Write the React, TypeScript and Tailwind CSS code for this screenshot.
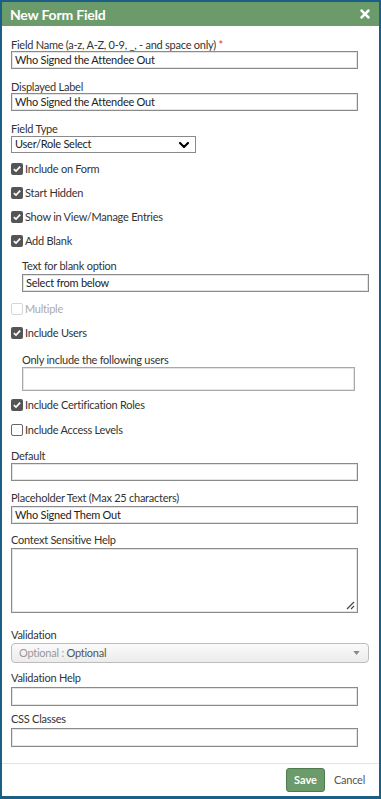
import { FaTimes } from 'react-icons/fa'
import { ChevronDown } from 'lucide-react'

const font = { fontFamily: 'Lato, "Open Sans", Arial, sans-serif' }

function Label({ children, className = '' }: { children: React.ReactNode; className?: string }) {
  return (
    <div className={`h-[13px] text-[11px] leading-[13px] tracking-[-0.25px] text-[#333] ${className}`}>
      {children}
    </div>
  )
}

function TextBox({ value = '', className = '' }: { value?: string; className?: string }) {
  return (
    <div
      className={`flex items-center border border-[#8a8a8a] bg-white px-[3px] text-[11px] tracking-[-0.25px] text-[#222] shadow-[inset_0_0_0_1px_#e4e4e4] ${className}`}
    >
      {value}
    </div>
  )
}

function Check({
  label,
  checked = true,
  disabled = false,
  className = '',
}: {
  label: string
  checked?: boolean
  disabled?: boolean
  className?: string
}) {
  return (
    <div className={`flex h-[14px] items-center gap-[2px] text-[11px] tracking-[-0.25px] ${className}`}>
      {checked ? (
        <span className="flex size-[12px] items-center justify-center rounded-[2px] bg-[#555]">
          <svg viewBox="0 0 12 12" className="size-[10px]">
            <path d="M2.2 6.2 L4.8 8.6 L9.8 3.2" fill="none" stroke="#fff" strokeWidth="2" />
          </svg>
        </span>
      ) : (
        <span
          className={`size-[12px] rounded-[2px] border bg-white ${
            disabled ? 'border-[#d6d6d6]' : 'border-[#666]'
          }`}
        />
      )}
      <span className={disabled ? 'text-[#aaa]' : 'text-[#333]'}>{label}</span>
    </div>
  )
}

export default function App() {
  return (
    <div
      style={font}
      className="flex h-[799px] w-[381px] flex-col border-2 border-b-[3px] border-[#1b5f86] bg-white"
    >
      {/* header */}
      <div className="flex h-[24px] shrink-0 items-center justify-between bg-[#6b9b6b] pl-[8px] pr-[7px]">
        <span className="text-[14px] font-bold tracking-[-0.2px] text-white">New Form Field</span>
        <FaTimes className="size-[14px] text-white" />
      </div>

      {/* body */}
      <div className="flex flex-1 flex-col pl-[9px]">
        <Label className="mt-[12px]">
          Field Name (a-z, A-Z, 0-9, _, - and space only) <span className="text-[#d33]">*</span>
        </Label>
        <TextBox value="Who Signed the Attendee Out" className="h-[18px] w-[347px]" />

        <Label className="mt-[11px]">Displayed Label</Label>
        <TextBox value="Who Signed the Attendee Out" className="h-[18px] w-[347px]" />

        <Label className="mt-[11px]">Field Type</Label>
        <div className="mt-[1px] flex h-[17px] w-[185px] items-center justify-between border border-[#8a8a8a] bg-white pl-[3px] pr-[2px] text-[11px] tracking-[-0.25px] text-[#222]">
          <span>User/Role Select</span>
          <ChevronDown className="h-[16px] w-[18px] text-black" strokeWidth={3.2} />
        </div>

        <Check label="Include on Form" className="mt-[9px]" />
        <Check label="Start Hidden" className="mt-[10px]" />
        <Check label="Show in View/Manage Entries" className="mt-[10px]" />
        <Check label="Add Blank" className="mt-[10px]" />

        <div className="flex flex-col pl-[11px]">
          <Label className="mt-[11px]">Text for blank option</Label>
          <TextBox value="Select from below" className="mt-[2px] h-[18px] w-[347px]" />
        </div>

        <Check label="Multiple" checked={false} disabled className="mt-[10px]" />
        <Check label="Include Users" className="mt-[10px]" />

        <div className="flex flex-col pl-[11px]">
          <Label className="mt-[13px]">Only include the following users</Label>
          <TextBox className="mt-[1px] h-[24px] w-[333px] border-[#aaa]" />
        </div>

        <Check label="Include Certification Roles" className="mt-[7px]" />
        <Check label="Include Access Levels" checked={false} className="mt-[11px]" />

        <Label className="mt-[12px]">Default</Label>
        <TextBox className="mt-[1px] h-[18px] w-[347px]" />

        <Label className="mt-[10px]">Placeholder Text (Max 25 characters)</Label>
        <TextBox value="Who Signed Them Out" className="mt-[2px] h-[18px] w-[347px]" />

        <Label className="mt-[9px]">Context Sensitive Help</Label>
        <div className="relative mt-[2px] h-[65px] w-[347px] border border-[#8a8a8a] bg-white shadow-[inset_0_0_0_1px_#e4e4e4]">
          <svg viewBox="0 0 10 10" className="absolute bottom-[2px] right-[2px] size-[10px]">
            <path d="M9 2 L2 9 M9 6 L6 9" stroke="#444" strokeWidth="1.2" />
          </svg>
        </div>

        <Label className="mt-[15px]">Validation</Label>
        <div className="mt-[2px] flex h-[20px] w-[358px] items-center justify-between rounded-[4px] border border-[#bdbdbd] bg-gradient-to-b from-[#fafafa] to-[#ececec] pl-[7px] pr-[8px] text-[11px] tracking-[-0.25px]">
          <span>
            <span className="text-[#999]">Optional : </span>
            <span className="text-[#555]">Optional</span>
          </span>
          <svg viewBox="0 0 8 5" className="h-[4px] w-[7px]">
            <path d="M0 0 L8 0 L4 5 Z" fill="#888" />
          </svg>
        </div>

        <Label className="mt-[8px]">Validation Help</Label>
        <TextBox className="mt-[3px] h-[19px] w-[347px]" />

        <Label className="mt-[6px]">CSS Classes</Label>
        <TextBox className="mt-[3px] h-[19px] w-[347px]" />
      </div>

      {/* footer */}
      <div className="flex h-[33px] shrink-0 items-center justify-end gap-[9px] border-t border-[#e2e2e2] pr-[14px]">
        <button className="h-[24px] w-[39px] rounded-[3px] border border-[#4e7a4e] bg-[#6b9b6b] text-[11px] font-bold text-white">
          Save
        </button>
        <span className="text-[11px] tracking-[-0.25px] text-[#555]">Cancel</span>
      </div>
    </div>
  )
}
